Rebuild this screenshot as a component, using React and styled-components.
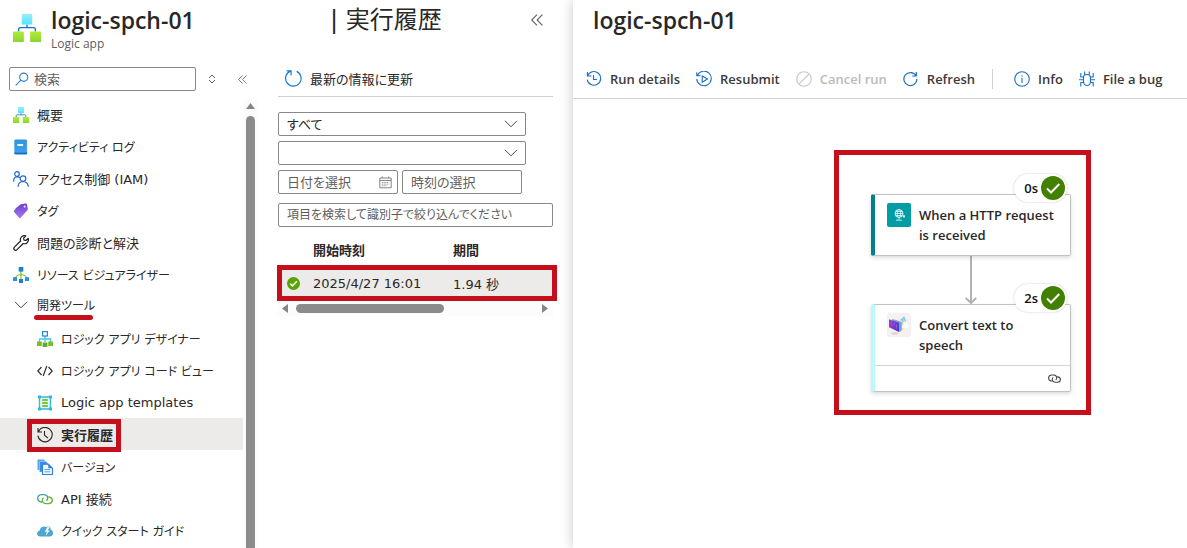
import React from "react"
import styled, { createGlobalStyle, css } from "styled-components"

const jaFont = `"DejaVu Sans", "Noto Sans CJK JP", sans-serif`
const uiFont = `"Open Sans", "Noto Sans CJK JP", sans-serif`
const red = "#c50f1a"

const GlobalStyle = createGlobalStyle`
  * {
    box-sizing: border-box;
  }

  body {
    margin: 0;
    background: #fff;
    color: #292827;
    font-family: ${jaFont};
    font-size: 13px;
    font-feature-settings: "palt";
    overflow: hidden;
  }

  button, input, select {
    font: inherit;
    color: inherit;
    font-feature-settings: inherit;
  }

  svg {
    display: block;
    flex-shrink: 0;
  }
`

const Page = styled.div`
  display: grid;
  grid-template-columns: 573px 1fr;
  height: 100vh;
`

const Blade = styled.section`
  display: flex;
  flex-direction: column;
  min-width: 0;
  min-height: 0;
  background: #fff;
`

const RunBlade = styled(Blade)`
  box-shadow: 0 0 12px rgba(0, 0, 0, 0.22);
`

const Header = styled.header`
  display: flex;
  align-items: flex-start;
  height: 64px;
  padding: 4px 28px 0 12px;
`

const AppName = styled.div`
  width: 288px;
  padding-left: 9px;
`

const Title = styled.h1`
  margin: 0;
  font-family: ${uiFont};
  font-size: 23px;
  font-weight: 600;
  line-height: 32px;
`

const Subtitle = styled.div`
  font-family: ${uiFont};
  font-size: 12px;
  line-height: 16px;
  color: #605e5c;
`

const PageName = styled.h2`
  flex: 1;
  margin: 0;
  font-size: 24px;
  font-weight: 400;
  line-height: 32px;
`

const IconButton = styled.button`
  display: flex;
  align-items: center;
  justify-content: center;
  width: 16px;
  height: ${p => p.$height || 24}px;
  padding: 0;
  border: 0;
  background: none;
  color: #605e5c;
`

const Body = styled.div`
  display: flex;
  flex: 1;
  min-height: 0;
`

const Sidebar = styled.div`
  display: flex;
  flex-direction: column;
  width: 258px;
`

const SearchRow = styled.div`
  display: flex;
  align-items: center;
  gap: 8px;
  padding: 3px 8px 7px 9px;

  & > button:last-child {
    margin-left: 6px;
  }
`

const SearchField = styled.label`
  display: flex;
  align-items: center;
  gap: 5px;
  width: 187px;
  height: 24px;
  padding: 0 5px;
  border: 1px solid #8a8886;
  border-radius: 2px;
`

const SearchInput = styled.input`
  flex: 1;
  min-width: 0;
  padding: 0;
  border: 0;
  outline: 0;

  &::placeholder {
    color: #605e5c;
    opacity: 1;
  }
`

const MenuArea = styled.div`
  display: flex;
  flex: 1;
  min-height: 0;
`

const Menu = styled.ul`
  flex: 1;
  margin: 0;
  padding: 0;
  list-style: none;
  overflow: hidden;
`

const MenuItem = styled.li`
  position: relative;
`

const MenuLink = styled.a`
  display: flex;
  align-items: center;
  gap: 8px;
  height: 32px;
  padding-left: ${p => (p.$sub ? 37 : 13)}px;
  padding-bottom: ${p => (p.$group ? 4 : 0)}px;
  background: ${p => (p.$selected ? "#edebe9" : "none")};
  font-size: ${p => (p.$kana ? 12 : 13)}px;
  font-weight: ${p => (p.$selected ? 700 : 400)};
  color: inherit;
  text-decoration: none;
  white-space: nowrap;

  svg {
    margin-top: 2px;
  }
`

const Frame = styled.div`
  position: absolute;
  border: 5px solid ${red};
  pointer-events: none;
`

const MenuFrame = styled(Frame)`
  top: 1px;
  left: 27px;
  width: 94px;
  height: 33px;
`

const Underline = styled.div`
  position: absolute;
  left: 34px;
  bottom: 2px;
  width: 59px;
  height: 5px;
  border-radius: 3px;
  background: ${red};
`

const VerticalBar = styled.div`
  display: flex;
  flex-direction: column;
  align-items: center;
  gap: 7px;
  width: 15px;
  padding-top: 5px;
  background: #fcfcfc;
`

const HorizontalBar = styled.div`
  display: flex;
  align-items: center;
  gap: 8px;
  height: 15px;
  padding: 0 5px 0 4px;
  background: #fcfcfc;

  & > svg:last-child {
    margin-left: auto;
  }
`

const Thumb = styled.div`
  border-radius: ${p => (p.$vertical ? "5px 5px 0 0" : "5px")};
  background: #8b8b8b;
  ${p =>
    p.$vertical
      ? css`
          flex: 1;
          width: 9px;
        `
      : css`
          width: 148px;
          height: 9px;
        `}
`

const Runs = styled.div`
  flex: 1;
  padding: 0 20px;
`

const RefreshBar = styled.div`
  display: flex;
  height: 33px;
  margin-bottom: 15px;
  border-bottom: 1px solid #d2d0ce;
`

const RefreshButton = styled.button`
  display: flex;
  align-items: center;
  gap: 8px;
  height: 28px;
  padding: 0 7px;
  border: 0;
  background: none;
`

const Filters = styled.div`
  display: flex;
  flex-direction: column;
  gap: 5px;
`

const SelectBox = styled.div`
  position: relative;
  width: 248px;

  svg {
    position: absolute;
    top: 8px;
    right: 7px;
    pointer-events: none;
  }
`

const field = css`
  height: 24px;
  border: 1px solid #8a8886;
  border-radius: 2px;
  background: #fff;
`

const Select = styled.select`
  ${field}
  display: block;
  width: 100%;
  padding: 0 8px;
  appearance: none;
`

const DateRow = styled.div`
  display: flex;
  gap: 4px;
`

const Field = styled.label`
  ${field}
  display: flex;
  align-items: center;
  width: ${p => (p.$full ? "100%" : "120px")};
  padding: 0 5px 0 8px;
  margin-top: ${p => (p.$full ? 4 : 0)}px;
  font-size: ${p => (p.$full ? 12 : 13)}px;
`

const RunsTable = styled.table`
  width: 100%;
  margin-top: 7px;
  border-collapse: collapse;
  table-layout: fixed;

  th,
  td {
    padding: 0;
    text-align: left;
    white-space: nowrap;
  }

  th {
    height: 31px;
    font-weight: 700;
  }

  td {
    height: 36px;
    background: #edebe9;
  }
`

const StatusCell = styled.td`
  && {
    padding-left: 9px;
  }
`

const TableArea = styled.div`
  position: relative;
`

const RowFrame = styled(Frame)`
  left: -1px;
  right: -4px;
  bottom: 0;
  height: 36px;
`

const RunHeader = styled.header`
  height: 64px;
  padding: 4px 20px 0;
`

const Toolbar = styled.div`
  display: flex;
  align-items: center;
  height: 35px;
  padding: 0 0 4px 13px;
  border-bottom: 1px solid #d2d0ce;
`

const ToolButton = styled.button`
  display: flex;
  flex-shrink: 0;
  align-items: center;
  gap: 8px;
  height: 30px;
  margin-right: 16px;
  padding: 0;
  border: 0;
  background: none;
  font-family: ${uiFont};
  font-size: 13px;
  font-weight: 600;
  white-space: nowrap;
  color: ${p => (p.disabled ? "#bdbbb9" : "#3b3a39")};

  svg {
    color: ${p => (p.disabled ? "#c8c6c4" : "#1a6fc0")};
  }
`

const Divider = styled.div`
  flex-shrink: 0;
  width: 1px;
  height: 20px;
  margin: 0 21px 0 1px;
  background: #d2d0ce;
`

const Canvas = styled.div`
  position: relative;
  flex: 1;
`

const FlowFrame = styled(Frame)`
  top: 51px;
  left: 261px;
  width: 257px;
  height: 265px;
  padding: 39px 15px 0 32px;
  pointer-events: auto;
`

const Node = styled.div`
  position: relative;
  border: 1px solid #c4c2c0;
  border-left: 4px solid ${p => p.$accent};
  border-radius: 2px;
  background: #fff;
  box-shadow: 0 2px 4px rgba(0, 0, 0, 0.14);
`

const NodeTitle = styled.div`
  display: flex;
  gap: 8px;
  height: 60px;
  padding: 8px 0 0 12px;
  font-family: ${uiFont};
  font-size: 13px;
  font-weight: 600;
  line-height: 20px;
`

const NodeText = styled.span`
  flex: 1;
  max-width: ${p => p.$width || 144}px;
  padding-top: 2px;
`

const NodeFooter = styled.div`
  display: flex;
  align-items: center;
  justify-content: flex-end;
  height: 26px;
  padding-right: 9px;
  border-top: 1px solid #d8d6d4;
`

const Badge = styled.div`
  position: absolute;
  top: -21px;
  right: 3px;
  display: flex;
  align-items: center;
  gap: 3px;
  height: 28px;
  padding: 0 2px 0 10px;
  border-radius: 14px;
  background: #fff;
  box-shadow: 0 0 2px rgba(0, 0, 0, 0.25);
  font-family: ${uiFont};
  font-size: 13px;
  font-weight: 600;
  color: #111;
`

const Edge = styled.div`
  display: flex;
  justify-content: center;
  height: 48px;
`

const Svg = ({ size = 16, children, ...rest }) => (
  <svg width={size} height={size} viewBox="0 0 16 16" fill="none" aria-hidden="true" {...rest}>
    {children}
  </svg>
)

const LogicAppIcon = ({ size }) => (
  <Svg size={size}>
    <defs>
      <linearGradient id="logicTop" x1="0" y1="0" x2="0" y2="1">
        <stop offset="0" stopColor="#9cebff" />
        <stop offset="1" stopColor="#50e6ff" />
      </linearGradient>
      <linearGradient id="logicLeaf" x1="0" y1="0" x2="0" y2="1">
        <stop offset="0" stopColor="#b4ec36" />
        <stop offset="1" stopColor="#86d633" />
      </linearGradient>
    </defs>
    <path d="M8 6v1.800M3.200 10V8.800q0-1 1-1h7.600q1 0 1 1V10" stroke="#1c6fc4" strokeWidth="0.800" />
    <rect x="5" y="0" width="6" height="6" rx="0.300" fill="url(#logicTop)" />
    <rect x="0" y="10" width="6.200" height="6" rx="0.300" fill="url(#logicLeaf)" />
    <rect x="9.800" y="10" width="6.200" height="6" rx="0.300" fill="url(#logicLeaf)" />
  </Svg>
)

const BookIcon = () => (
  <Svg>
    <defs>
      <linearGradient id="bookCover" x1="0" y1="0" x2="0" y2="1">
        <stop offset="0" stopColor="#2f92e2" />
        <stop offset="1" stopColor="#3aa0ee" />
      </linearGradient>
    </defs>
    <path d="M2 13.500V1.500Q2 .3 3.200.3h10.600v2H3.500z" fill="#a9cdee" />
    <path d="M12.800 1h1.400v14h-1.400z" fill="#5f9fd8" />
    <path d="M1.300 1.800Q1.300.8 2.300.8h10.200q.6 0 .6.6v12.200H1.300z" fill="url(#bookCover)" />
    <path d="M1.300 13.200h12.500v2.300H2.500q-1.200 0-1.200-1.200z" fill="#1473c4" />
    <path d="M4.300 5h5.800v2H4.300z" fill="#e9f5ff" />
  </Svg>
)

const PeopleIcon = () => (
  <Svg stroke="#1f66d1" strokeWidth="1.200" strokeLinecap="round">
    <circle cx="4" cy="3" r="2.300" />
    <circle cx="10" cy="7.600" r="2.800" />
    <path d="M.7 10.200q.1-4.400 3.300-4.600 1.500 0 2.600 1.100M5.100 15.300q.3-4.500 4.900-4.800 4.700.2 5.200 4.800" />
  </Svg>
)

const TagIcon = () => (
  <Svg>
    <defs>
      <linearGradient id="tagFill" x1="0" y1="0" x2="0" y2="1">
        <stop offset="0" stopColor="#6d3ccb" />
        <stop offset="1" stopColor="#a67af4" />
      </linearGradient>
    </defs>
    <path
      d="M7.800 1.300 12.800.4q.7 0 1 .7l1 4.700q.1.600-.3 1.100L7.500 14.900q-.7.700-1.300 0L1.300 9.300q-.6-.8-.3-1.600L3 5z"
      fill="url(#tagFill)"
    />
    <circle cx="11.700" cy="3.600" r="1.100" fill="#e8dcff" />
  </Svg>
)

const WrenchIcon = () => (
  <Svg stroke="#201f1e" strokeWidth="1.200" strokeLinejoin="round">
    <path d="M12.800.9 10.600 3.200l.4 1.900 1.900.4 2.300-2.200q.8 2.600-1 4.400-1.800 1.600-4 .8L4 14.700q-1.200 1.100-2.600.1-1.200-1.400 0-2.700L7.600 6Q6.700 3.700 8.500 1.900 10.300.2 12.800.9z" />
  </Svg>
)

const ResourceIcon = () => (
  <Svg>
    <path d="M8 4v8M2.500 11q.5-3.200 5.500-3.500 5 .3 5.500 3.500" stroke="#86c440" strokeWidth="1.200" />
    <rect x="5.700" y="0" width="4.600" height="4.600" fill="#1f7fd8" />
    <rect x="0" y="10.200" width="4" height="3.800" fill="#2c8fe0" />
    <rect x="6" y="12" width="4" height="4" fill="#1f7fd8" />
    <rect x="12" y="10.200" width="4" height="3.800" fill="#2c8fe0" />
    <circle cx="8" cy="7.600" r="1.100" fill="#86c440" />
  </Svg>
)

const ChevronIcon = ({ size = 16 }) => (
  <svg width={size} height={size / 2} viewBox="0 0 16 8" fill="none" aria-hidden="true">
    <path d="m2 .8 6 6 6-6" stroke="#484644" strokeWidth="1" />
  </svg>
)

const DesignerIcon = () => (
  <Svg>
    <path d="M8 5v6M2.500 11V8h11v3" stroke="#45c5ec" strokeWidth="1.300" />
    <rect x="5.600" y=".6" width="4.800" height="4.400" stroke="#2b88c8" strokeWidth="1.200" />
    <rect x="0" y="10.500" width="4.800" height="4.500" fill="#72c02e" />
    <rect x="5.600" y="11.500" width="4.800" height="4.500" fill="#62ad28" />
    <rect x="11.200" y="10.500" width="4.800" height="4.500" fill="#72c02e" />
  </Svg>
)

const CodeIcon = () => (
  <Svg stroke="#323130" strokeWidth="1.200">
    <path d="M4.500 4 .8 8l3.700 4M11.500 4l3.700 4-3.700 4M9.800 3 6.200 13" />
  </Svg>
)

const TemplateIcon = () => (
  <Svg>
    <path d="M2.500 2h11v12h-11z" fill="#e2f8fc" stroke="#32b8d8" strokeWidth="1.300" />
    <path d="M1 .5h3v3H1zM12 .5h3v3h-3zM1 12.500h3v3H1zM12 12.500h3v3h-3z" fill="#32b8d8" />
    <path d="M5.200 5h5.600M5.200 8h5.600M5.200 11h5.600" stroke="#7dc832" strokeWidth="1.800" />
  </Svg>
)

const HistoryIcon = ({ size }) => (
  <Svg size={size} stroke="currentColor" strokeWidth="1.100">
    <path d="M1 1v4h4M1.400 4.800A7.200 7.200 0 1 1 .9 8.600M7.500 4v4.200l3.500 3" />
  </Svg>
)

const RunDetailsIcon = () => (
  <Svg stroke="currentColor" strokeWidth="1.100">
    <path d="M1.400 1v4h4M1.600 4.800A6.800 6.800 0 1 1 1.200 8.600M7.500 4v4.500H11" />
  </Svg>
)

const VersionIcon = () => (
  <Svg>
    <path d="M.5 1.200Q.5.5 1.200.5H7L9.800 3.300V11H.5z" fill="#58a6ee" />
    <path d="M2.500 3.200Q2.500 2.500 3.200 2.500H9l2.800 2.800V13H2.500z" fill="#3b8ae2" stroke="#b5d8f8" strokeWidth="0.600" />
    <path d="M5.500 5.300h6l4 4v6.200h-10z" fill="#eef6ff" stroke="#2c7fd6" strokeWidth="1.100" />
    <path d="M11.300 5.200v4.100h4.200z" fill="#2c7fd6" />
    <path d="M7.500 10.500H13M7.500 12.800H13" stroke="#5ba3ea" />
  </Svg>
)

const LinkIcon = ({ size, left = "#6bb82e", right = "#3aa0a8" }) => (
  <Svg size={size} strokeWidth="1.300">
    <path d="M5 11H4.200Q.7 10.500.7 7.300.9 4 4.300 3.700h3Q10.500 4 10.700 7q0 1.800-1.300 2.800" stroke={right} />
    <path d="M11.200 6h.7q3.300.4 3.400 3.400-.2 3-3.400 3.200H8.600Q5.400 12.300 5.200 9.300q.1-1.600 1.300-2.600" stroke={left} />
  </Svg>
)

const CloudIcon = () => (
  <Svg>
    <path
      d="M3.300 13.500Q.2 13.200 0 10.400q.1-2.600 2.700-3 .5-3.600 4.200-4 1.300 0 2.200.6 1.400-1.300 3.100-.6 1.800.8 1.500 3 2.300.6 2.300 3.500-.1 3.400-3 3.600z"
      fill="#4da6cf"
    />
    <path d="M10.500 3.500 7.800 8.800h2l-1 4 4-5.300h-2L13 3.500z" fill="#eef9ff" />
  </Svg>
)

const DoubleChevron = ({ size = 10 }) => (
  <svg width={size} height={size} viewBox="0 0 10 10" fill="none" aria-hidden="true">
    <path d="M5 .5.600 5 5 9.500M9.500.5 5.100 5l4.400 4.500" stroke="currentColor" strokeWidth="0.900" />
  </svg>
)

const SortIcon = () => (
  <svg width="8" height="10" viewBox="0 0 8 10" fill="none" aria-hidden="true">
    <path d="m1 4 3-3 3 3M1 6l3 3 3-3" stroke="currentColor" />
  </svg>
)

const SearchIcon = () => (
  <Svg size={14} stroke="#2a7fc9" strokeWidth="1.200">
    <circle cx="10" cy="6" r="4.700" />
    <path d="M6.700 9.300.8 15.200" />
  </Svg>
)

const ReloadIcon = () => (
  <Svg size={17} stroke="#0f7bd3" strokeWidth="1.100">
    <path d="M5.200 1.100A7.300 7.300 0 1 0 11 1.300M1.500.9h4.200v4.200" />
  </Svg>
)

const CalendarIcon = () => (
  <Svg size={13} stroke="#797775" strokeWidth="1.100">
    <path d="M1 2.500h14v12H1zM1 5.500h14M4 .5v2M12 .5v2" />
    <path d="M3.500 8h9M3.500 10h9M3.500 12h6" strokeDasharray="1.200 1" />
  </Svg>
)

const SuccessIcon = ({ size, fill }) => (
  <Svg size={size}>
    <circle cx="8" cy="8" r="8" fill={fill} />
    <path d="m4 8.300 2.700 2.700L12.200 5.300" stroke="#fff" strokeWidth={size > 20 ? 1.300 : 2} />
  </Svg>
)

const ResubmitIcon = () => (
  <Svg stroke="currentColor" strokeWidth="1.100">
    <path d="M.8 1.200v3.600h3.800M1.200 4.700A7.300 7.300 0 1 1 .7 8" />
    <path d="M6.200 5v6.200L11.500 8z" />
  </Svg>
)

const CancelIcon = () => (
  <Svg stroke="currentColor" strokeWidth="1.100">
    <circle cx="8" cy="8" r="7.300" />
    <path d="M13.200 2.800 2.800 13.200" />
  </Svg>
)

const RefreshIcon = () => (
  <Svg stroke="currentColor" strokeWidth="1.200">
    <path d="M13.300 1v4h-4M13 4.800A6.500 6.500 0 1 0 13.900 8" />
  </Svg>
)

const InfoIcon = () => (
  <Svg stroke="currentColor" strokeWidth="1.100">
    <circle cx="8" cy="8" r="7.300" />
    <path d="M8 7v5M8 4.200v1.300" />
  </Svg>
)

const BugIcon = () => (
  <Svg stroke="currentColor" strokeWidth="1.100">
    <path d="M4.500 6.500q0-3 3.500-3t3.500 3v4.300q-.3 3.700-3.500 3.700t-3.500-3.700zM5.700 3.700V.5M10.300 3.700V.5M4.500 6H1.800V2M11.500 6h2.700V2M0 8.700h4.500M11.500 8.700H16M1.800 15.500v-4h2.700M14.200 15.500v-4h-2.700" />
  </Svg>
)

const HttpIcon = () => (
  <svg width="24" height="24" viewBox="0 0 24 24" fill="none" aria-hidden="true">
    <rect width="24" height="24" rx="2" fill="#009da5" />
    <g stroke="#d9f3f4" strokeWidth="0.900">
      <circle cx="12" cy="10.500" r="4" />
      <ellipse cx="12" cy="10.500" rx="1.800" ry="4" />
      <path d="M8 10.500h8M8.700 8.500h6.600M8.700 12.500h6.600M12 14.500v2.500M9 17.200h6" />
      <path d="M15.800 13.300h2.200M17 12v2.800" strokeWidth="1.200" />
    </g>
  </svg>
)

const SpeechIcon = () => (
  <svg width="24" height="24" viewBox="0 0 24 24" fill="none" aria-hidden="true">
    <defs>
      <linearGradient id="speechCard" x1="0" y1="0" x2="1" y2="1">
        <stop offset="0" stopColor="#a544c9" />
        <stop offset="1" stopColor="#5a30c4" />
      </linearGradient>
    </defs>
    <rect width="24" height="24" rx="2" fill="#f3f2f1" />
    <path d="m6 6 9.500 3v7.500L13 19z" fill="#f0a06a" />
    <path d="m4.500 6 9.500 3.300v8.200L12 19z" fill="#46b4ee" />
    <path d="m2 6.300 10 3.500V19L2 14.300z" fill="url(#speechCard)" />
    <path d="m4.500 8.800v4M7 9.800v2.500M9.500 11.500v4" stroke="#8a56e0" />
    <path d="M15.500 15q-1-3 1.500-3.500 1-2.500 3-.5 2.500 1 1.500 4z" fill="#fff" />
    <path d="m13.500 7.500 3.500-3 1.500 4M15.800 6v3.500" stroke="#8cc7ee" strokeWidth="1.600" />
    <ellipse cx="7.500" cy="20.500" rx="3.500" ry="1.200" fill="#d8d5d6" />
  </svg>
)

const Triangle = ({ dir }) => {
  const paths = { up: "M0 6 4.500 0 9 6z", left: "M6 0v9L0 4.500z", right: "M0 0v9l6-4.500z" }
  const up = dir === "up"
  return (
    <svg width={up ? 9 : 6} height={up ? 6 : 9} aria-hidden="true">
      <path d={paths[dir]} fill="#858585" />
    </svg>
  )
}

const menu = [
  { label: "概要", icon: <LogicAppIcon size={16} /> },
  { label: "アクティビティ ログ", icon: <BookIcon />, kana: true },
  { label: "アクセス制御 (IAM)", icon: <PeopleIcon /> },
  { label: "タグ", icon: <TagIcon />, kana: true },
  { label: "問題の診断と解決", icon: <WrenchIcon /> },
  { label: "リソース ビジュアライザー", icon: <ResourceIcon />, kana: true },
  { label: "開発ツール", icon: <ChevronIcon />, kana: true, group: true },
  { label: "ロジック アプリ デザイナー", icon: <DesignerIcon />, kana: true, sub: true },
  { label: "ロジック アプリ コード ビュー", icon: <CodeIcon />, kana: true, sub: true },
  { label: "Logic app templates", icon: <TemplateIcon />, sub: true },
  { label: "実行履歴", icon: <HistoryIcon />, sub: true, selected: true },
  { label: "バージョン", icon: <VersionIcon />, kana: true, sub: true },
  { label: "API 接続", icon: <LinkIcon />, sub: true },
  { label: "クイック スタート ガイド", icon: <CloudIcon />, kana: true, sub: true },
]

const actions = [
  { label: "Run details", icon: <RunDetailsIcon /> },
  { label: "Resubmit", icon: <ResubmitIcon /> },
  { label: "Cancel run", icon: <CancelIcon />, disabled: true },
  { label: "Refresh", icon: <RefreshIcon /> },
]

const helpActions = [
  { label: "Info", icon: <InfoIcon /> },
  { label: "File a bug", icon: <BugIcon /> },
]

function SideMenu() {
  return (
    <Sidebar>
      <SearchRow>
        <SearchField>
          <SearchIcon />
          <SearchInput type="text" placeholder="検索" aria-label="検索" />
        </SearchField>
        <IconButton aria-label="展開">
          <SortIcon />
        </IconButton>
        <IconButton aria-label="メニューを折りたたむ">
          <DoubleChevron size={9} />
        </IconButton>
      </SearchRow>
      <MenuArea>
        <Menu>
          {menu.map(item => (
            <MenuItem key={item.label}>
              <MenuLink
                href="#"
                $sub={item.sub}
                $group={item.group}
                $kana={item.kana}
                $selected={item.selected}
              >
                {item.icon}
                {item.label}
              </MenuLink>
              {item.group && <Underline />}
              {item.selected && <MenuFrame />}
            </MenuItem>
          ))}
        </Menu>
        <VerticalBar>
          <Triangle dir="up" />
          <Thumb $vertical />
        </VerticalBar>
      </MenuArea>
    </Sidebar>
  )
}

function RunHistory() {
  return (
    <Runs>
      <RefreshBar>
        <RefreshButton>
          <ReloadIcon />
          最新の情報に更新
        </RefreshButton>
      </RefreshBar>
      <Filters>
        <SelectBox>
          <Select aria-label="状態">
            <option>すべて</option>
          </Select>
          <ChevronIcon />
        </SelectBox>
        <SelectBox>
          <Select aria-label="期間">
            <option></option>
          </Select>
          <ChevronIcon />
        </SelectBox>
        <DateRow>
          <Field>
            <SearchInput type="text" placeholder="日付を選択" aria-label="日付を選択" />
            <CalendarIcon />
          </Field>
          <Field>
            <SearchInput type="text" placeholder="時刻の選択" aria-label="時刻の選択" />
          </Field>
        </DateRow>
        <Field $full>
          <SearchInput
            type="text"
            placeholder="項目を検索して識別子で絞り込んでください"
            aria-label="識別子で絞り込み"
          />
        </Field>
      </Filters>
      <TableArea>
        <RunsTable>
          <colgroup>
            <col width="35" />
            <col width="140" />
            <col />
          </colgroup>
          <thead>
            <tr>
              <th aria-label="状態" />
              <th>開始時刻</th>
              <th>期間</th>
            </tr>
          </thead>
          <tbody>
            <tr>
              <StatusCell>
                <SuccessIcon size={13} fill="#57a300" />
              </StatusCell>
              <td>2025/4/27 16:01</td>
              <td>1.94 秒</td>
            </tr>
          </tbody>
        </RunsTable>
        <RowFrame />
      </TableArea>
      <HorizontalBar>
        <Triangle dir="left" />
        <Thumb />
        <Triangle dir="right" />
      </HorizontalBar>
    </Runs>
  )
}

function FlowNode({ accent, icon, title, textWidth, time, children }) {
  return (
    <Node $accent={accent}>
      <NodeTitle>
        {icon}
        <NodeText $width={textWidth}>{title}</NodeText>
      </NodeTitle>
      {children}
      <Badge>
        {time}
        <SuccessIcon size={24} fill="#428000" />
      </Badge>
    </Node>
  )
}

function App() {
  return (
    <>
      <GlobalStyle />
      <Page>
        <Blade>
          <Header>
            <svg width="30" height="40" viewBox="0 0 30 40" aria-hidden="true">
              <g transform="translate(1 10)">
                <LogicAppIcon size={28} />
              </g>
            </svg>
            <AppName>
              <Title>logic-spch-01</Title>
              <Subtitle>Logic app</Subtitle>
            </AppName>
            <PageName>| 実行履歴</PageName>
            <IconButton $height={32} aria-label="折りたたむ">
              <DoubleChevron size={12} />
            </IconButton>
          </Header>
          <Body>
            <SideMenu />
            <RunHistory />
          </Body>
        </Blade>
        <RunBlade>
          <RunHeader>
            <Title>logic-spch-01</Title>
          </RunHeader>
          <Toolbar>
            {actions.map(action => (
              <ToolButton key={action.label} disabled={action.disabled}>
                {action.icon}
                {action.label}
              </ToolButton>
            ))}
            <Divider />
            {helpActions.map(action => (
              <ToolButton key={action.label}>
                {action.icon}
                {action.label}
              </ToolButton>
            ))}
          </Toolbar>
          <Canvas>
            <FlowFrame>
              <FlowNode accent="#00808a" icon={<HttpIcon />} title="When a HTTP request is received" time="0s" />
              <Edge>
                <svg width="12" height="48" fill="none" aria-hidden="true">
                  <path d="M6 0v47M.8 42 6 47l5.200-5" stroke="#b1b1b7" strokeWidth="2" />
                </svg>
              </Edge>
              <FlowNode
                accent="#b8fbff"
                icon={<SpeechIcon />}
                title="Convert text to speech"
                textWidth={110}
                time="2s"
              >
                <NodeFooter>
                  <LinkIcon size={13} left="#484644" right="#484644" />
                </NodeFooter>
              </FlowNode>
            </FlowFrame>
          </Canvas>
        </RunBlade>
      </Page>
    </>
  )
}

export default App
